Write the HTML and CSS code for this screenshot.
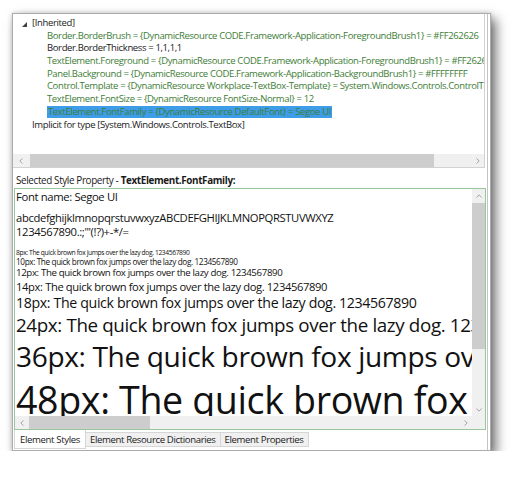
FILE: index.html
```html
<!DOCTYPE html>
<html>
<head>
<meta charset="utf-8">
<link rel="stylesheet" href="styles.css">
</head>
<body>
<div class="window">
  <div class="inner">
    <div class="tree-panel">
      <div class="tree">
        <div class="row root"><svg class="expander" width="5" height="5" viewBox="0 0 5 5"><polygon points="5,0 5,5 0,5" fill="#404040"/></svg>[Inherited]</div>
        <div class="row child green">Border.BorderBrush = {DynamicResource CODE.Framework-Application-ForegroundBrush1} = #FF262626</div>
        <div class="row child">Border.BorderThickness = 1,1,1,1</div>
        <div class="row child green">TextElement.Foreground = {DynamicResource CODE.Framework-Application-ForegroundBrush1} = #FF262626</div>
        <div class="row child green">Panel.Background = {DynamicResource CODE.Framework-Application-BackgroundBrush1} = #FFFFFFFF</div>
        <div class="row child green">Control.Template = {DynamicResource Workplace-TextBox-Template} = System.Windows.Controls.ControlTemplate</div>
        <div class="row child green">TextElement.FontSize = {DynamicResource FontSize-Normal} = 12</div>
        <div class="row child green"><span class="selected">TextElement.FontFamily = {DynamicResource DefaultFont} = Segoe UI</span></div>
        <div class="row top">Implicit for type [System.Windows.Controls.TextBox]</div>
      </div>
      <div class="hscroll">
        <div class="sbtn sbtn-wide"><svg width="4" height="6" viewBox="0 0 4 6"><polyline points="3.5,0.5 0.8,3 3.5,5.5" fill="none" stroke="#a6a6a6" stroke-width="1"/></svg></div>
        <div class="track"><div class="thumb thumb-top"></div></div>
        <div class="sbtn"><svg width="4" height="6" viewBox="0 0 4 6"><polyline points="0.5,0.5 3.2,3 0.5,5.5" fill="none" stroke="#a6a6a6" stroke-width="1"/></svg></div>
      </div>
    </div>
    <div class="label">Selected Style Property - <b>TextElement.FontFamily:</b></div>
    <div class="fontbox">
      <div class="preview">
        <div class="fname">Font name: Segoe UI</div>
        <div class="chars">abcdefghijklmnopqrstuvwxyzABCDEFGHIJKLMNOPQRSTUVWXYZ</div>
        <div class="chars">1234567890.:;'"(!?)+-*/=</div>
        <div class="samples">
          <div class="s8">8px: The quick brown fox jumps over the lazy dog. 1234567890</div>
          <div class="s10">10px: The quick brown fox jumps over the lazy dog. 1234567890</div>
          <div class="s12">12px: The quick brown fox jumps over the lazy dog. 1234567890</div>
          <div class="s14">14px: The quick brown fox jumps over the lazy dog. 1234567890</div>
          <div class="s18">18px: The quick brown fox jumps over the lazy dog. 1234567890</div>
          <div class="s24">24px: The quick brown fox jumps over the lazy dog. 1234567890</div>
          <div class="s36">36px: The quick brown fox jumps over the lazy dog. 1234567890</div>
          <div class="s48">48px: The quick brown fox jumps over the lazy dog. 1234567890</div>
        </div>
      </div>
      <div class="vscroll">
        <div class="vbtn"><svg width="6" height="4" viewBox="0 0 6 4"><polyline points="0.5,3.5 3,0.8 5.5,3.5" fill="none" stroke="#a6a6a6" stroke-width="1"/></svg></div>
        <div class="vtrack"><div class="vthumb"></div></div>
        <div class="vbtn"><svg width="6" height="4" viewBox="0 0 6 4"><polyline points="0.5,0.5 3,3.2 5.5,0.5" fill="none" stroke="#a6a6a6" stroke-width="1"/></svg></div>
      </div>
      <div class="hscroll hscroll-box">
        <div class="sbtn"><svg width="4" height="6" viewBox="0 0 4 6"><polyline points="3.5,0.5 0.8,3 3.5,5.5" fill="none" stroke="#a6a6a6" stroke-width="1"/></svg></div>
        <div class="track"><div class="thumb thumb-box"></div></div>
        <div class="sbtn"><svg width="4" height="6" viewBox="0 0 4 6"><polyline points="0.5,0.5 3.2,3 0.5,5.5" fill="none" stroke="#a6a6a6" stroke-width="1"/></svg></div>
      </div>
      <div class="corner"></div>
    </div>
    <div class="tabs">
      <div class="tab active">Element Styles</div>
      <div class="tab">Element Resource Dictionaries</div>
      <div class="tab">Element Properties</div>
    </div>
  </div>
</div>
</body>
</html>
```

FILE: styles.css
```css
html, body {
  margin: 0;
  padding: 0;
  background: #ffffff;
}

body {
  font-family: "Open Sans", "Noto Sans", sans-serif;
  letter-spacing: -0.023em;
  color: #1a1a1a;
}

.window {
  box-sizing: border-box;
  margin: 13px 0 0 12px;
  width: 479px;
  height: 438px;
  border: 1px solid #acacac;
  background: #ffffff;
  box-shadow: 5px 6px 11px rgba(0, 0, 0, 0.55), 0 0 5px rgba(0, 0, 0, 0.18);
}

.inner {
  height: 100%;
  margin-right: 2px;
  border-right: 1px solid #c4c4c4;
  display: flex;
  flex-direction: column;
}

/* ---------- top tree panel ---------- */
.tree-panel {
  height: 154px;
  box-sizing: border-box;
  margin-right: 2px;
  border-right: 1px solid #d2d2d2;
  border-bottom: 1px solid #d2d2d2;
  display: flex;
  flex-direction: column;
}

.tree {
  flex: 1;
  overflow: hidden;
  padding-top: 3px;
  font-size: 9.5px;
}

.row {
  height: 12.7px;
  line-height: 12.7px;
  white-space: nowrap;
  color: #1a1a1a;
}

.row.root {
  padding-left: 9px;
}

.row.top {
  padding-left: 19px;
}

.row.child {
  padding-left: 34px;
}

.row.green {
  color: #3d7d36;
}

.expander {
  margin-right: 5px;
  vertical-align: -1px;
}

.selected {
  display: inline-block;
  height: 12px;
  line-height: 12px;
  padding: 0 1px;
  background: #3e9de8;
}

/* ---------- scrollbars ---------- */
.hscroll {
  height: 13px;
  display: flex;
  background: #f0f0f0;
}

.sbtn {
  width: 13px;
  flex: none;
  display: flex;
  align-items: center;
  justify-content: center;
}

.sbtn-wide {
  width: 16px;
}

.track {
  flex: 1;
  display: flex;
  align-items: stretch;
  padding: 0 1px;
}

.thumb {
  background: #cdcdcd;
}

.thumb-top {
  width: 404px;
}

.thumb-box {
  width: 121px;
}

/* ---------- label ---------- */
.label {
  height: 20px;
  box-sizing: border-box;
  padding: 6px 0 0 3px;
  font-size: 9.9px;
  line-height: 13px;
  white-space: nowrap;
}

.label b {
  font-weight: 700;
}

/* ---------- font preview box ---------- */
.fontbox {
  height: 242px;
  box-sizing: border-box;
  margin: 0 1px;
  border: 1px solid #9bc69b;
  display: grid;
  grid-template-columns: 1fr 13px;
  grid-template-rows: 1fr 13px;
}

.preview {
  overflow: hidden;
  padding: 1px 0 0 1px;
  white-space: nowrap;
  color: #111111;
}

.fname {
  font-size: 11.3px;
  line-height: 14.5px;
  margin-bottom: 6px;
}

.chars {
  font-size: 11.25px;
  line-height: 14.5px;
}

.samples {
  margin-top: 9px;
}

.s8 { font-size: 6.7px; line-height: 8.3px; }
.s10 { font-size: 8.2px; line-height: 10.4px; }
.s12 { font-size: 9.7px; line-height: 12.5px; }
.s14 { font-size: 11.2px; line-height: 14.5px; }
.s18 { font-size: 14.2px; line-height: 18.7px; }
.s24 { font-size: 18.8px; line-height: 25px; }
.s36 { font-size: 28.1px; line-height: 37.4px; }
.s48 { font-size: 37.6px; line-height: 50px; }

.vscroll {
  background: #f0f0f0;
  display: flex;
  flex-direction: column;
}

.vbtn {
  height: 13px;
  flex: none;
  display: flex;
  align-items: center;
  justify-content: center;
}

.vtrack {
  flex: 1;
  padding: 1px 0;
  display: flex;
  flex-direction: column;
}

.vthumb {
  height: 146px;
  background: #cdcdcd;
}

.corner {
  background: #f0f0f0;
}

/* ---------- tabs ---------- */
.tabs {
  flex: 1;
  display: flex;
  align-items: flex-start;
  font-size: 9.6px;
  white-space: nowrap;
}

.tab {
  box-sizing: border-box;
  height: 15px;
  line-height: 13px;
  margin-top: 2px;
  padding: 0 4px;
  border: 1px solid #d6d6d6;
  border-left: none;
  background: #f0f0f0;
  color: #1a1a1a;
}

.tab.active {
  height: 19px;
  margin-top: 0;
  margin-left: 1px;
  padding: 3px 5px 0 5px;
  line-height: 14px;
  border: 1px solid #d6d6d6;
  border-top: none;
  background: #ffffff;
}
```
